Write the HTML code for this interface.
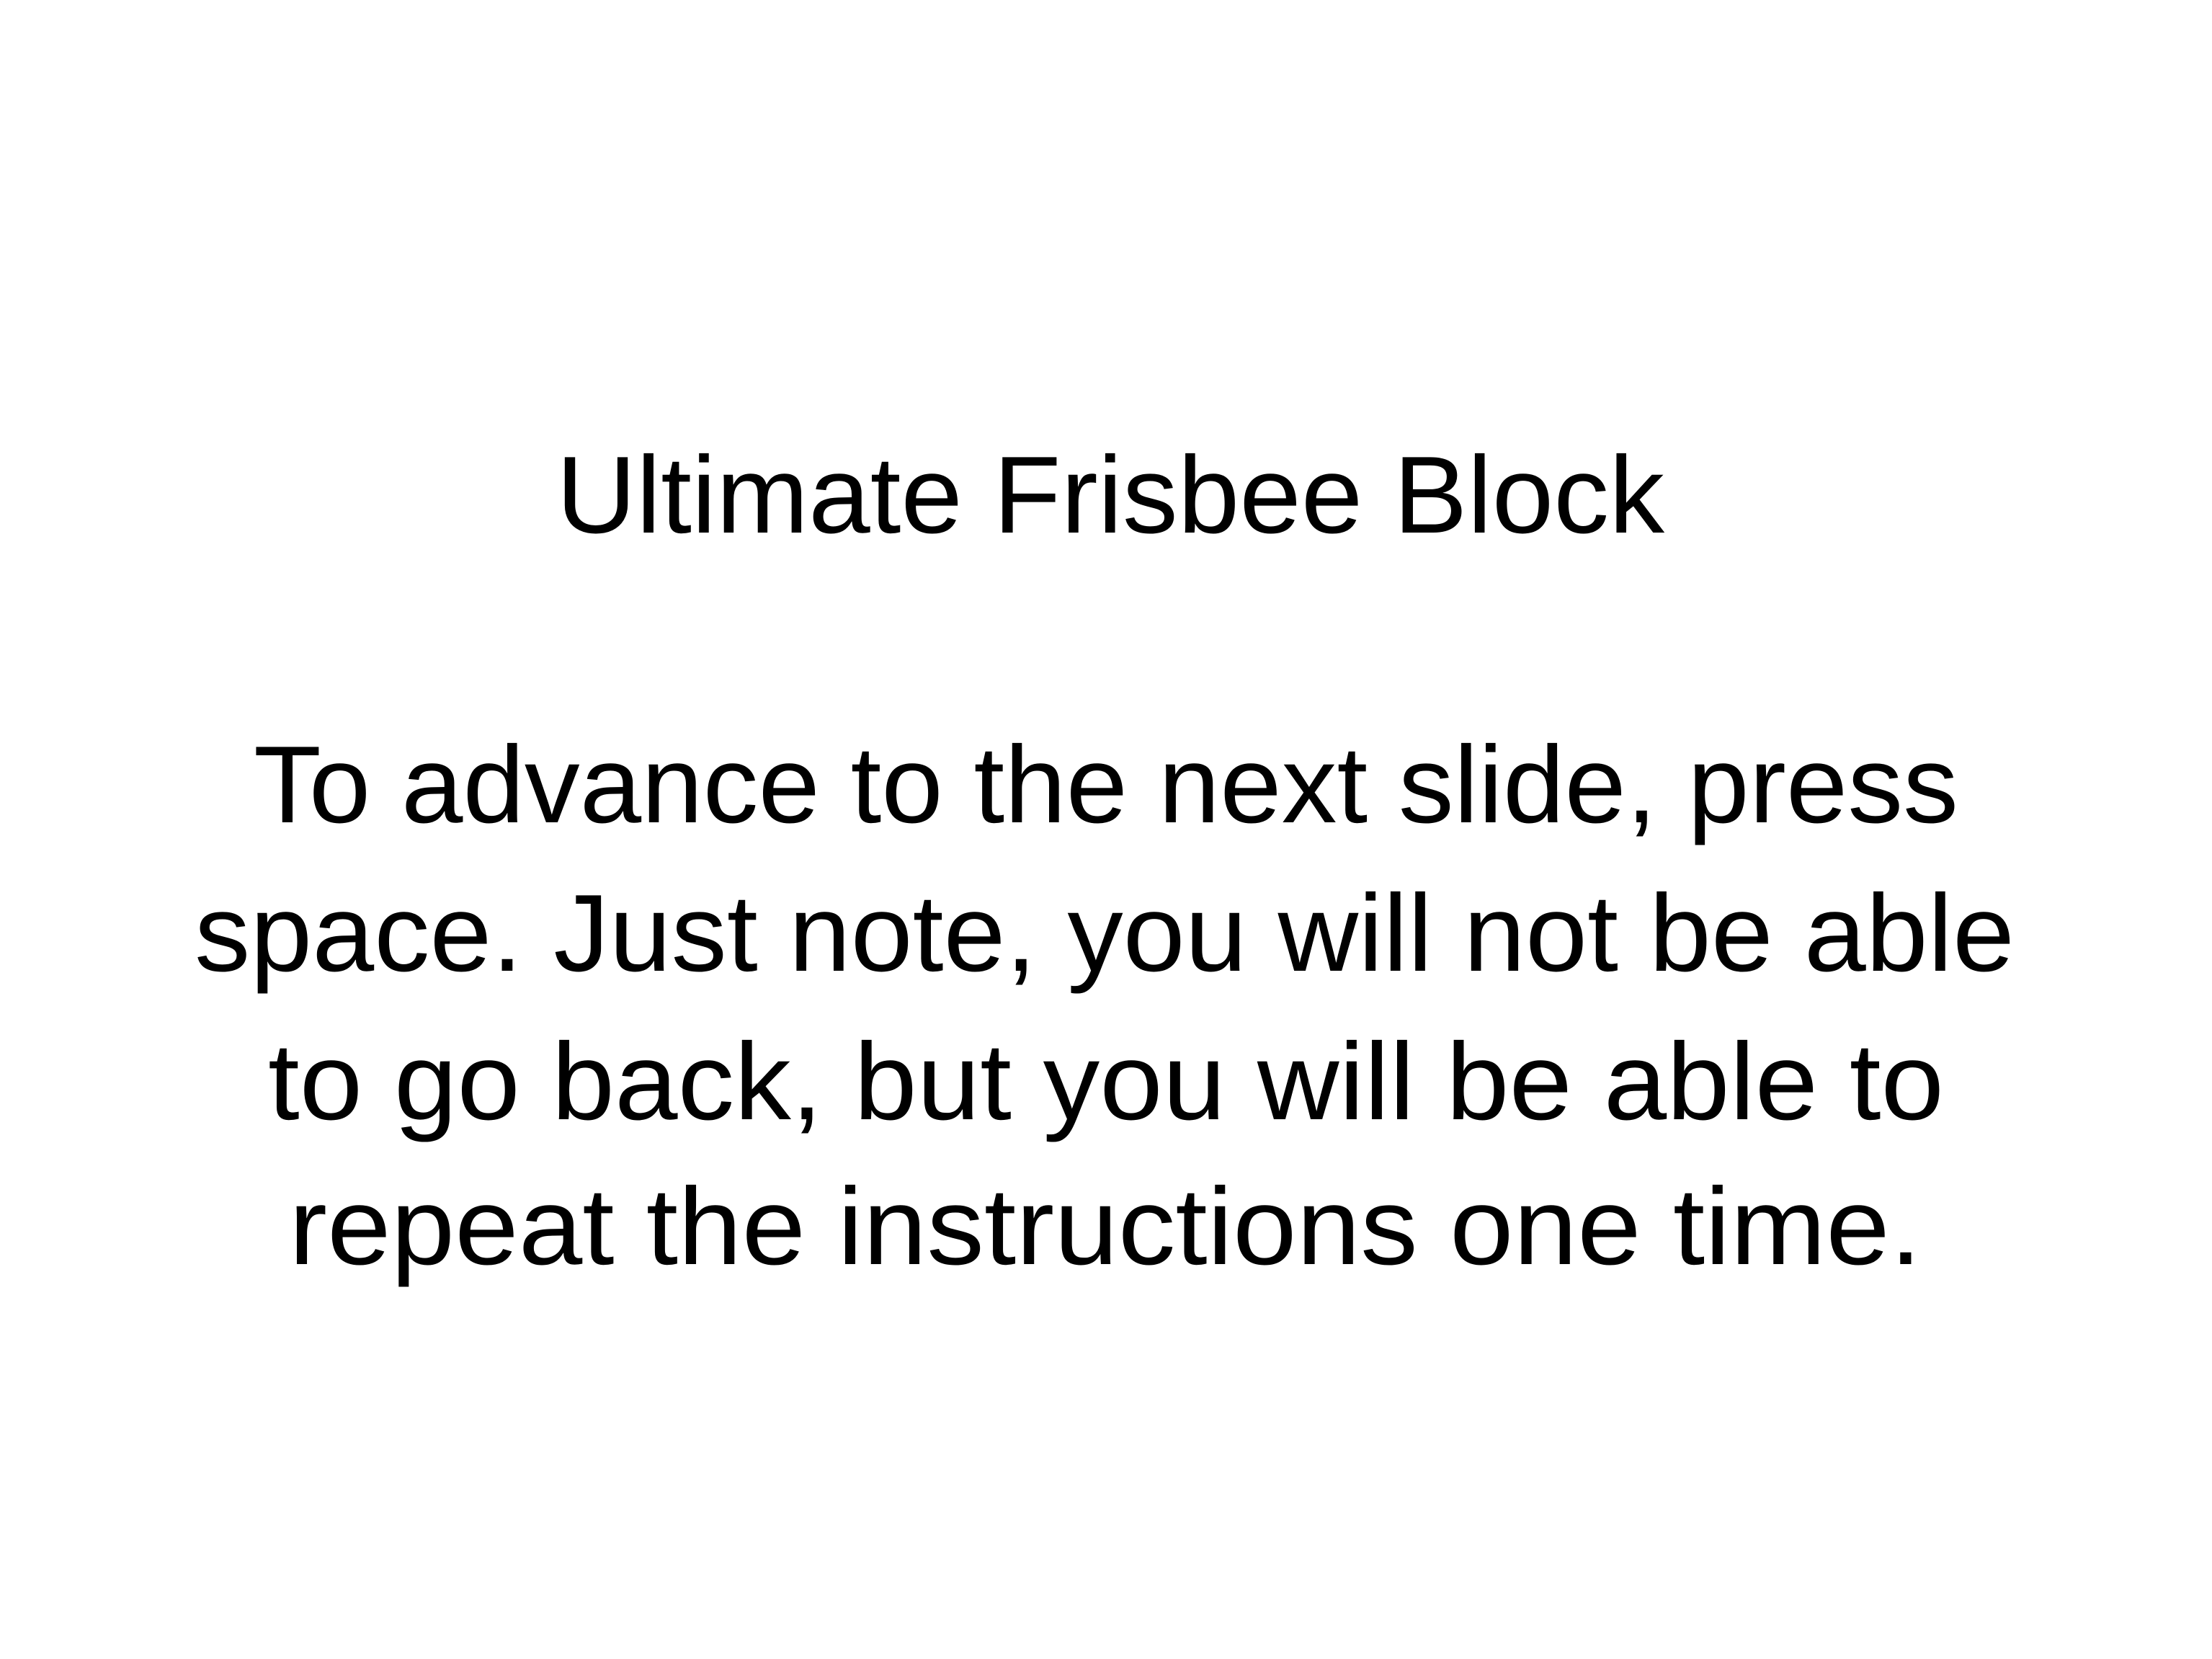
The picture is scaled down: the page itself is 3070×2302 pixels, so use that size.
<!DOCTYPE html>
<html><head><meta charset="utf-8"><style>
html,body{margin:0;padding:0;background:#fff;}
svg{display:block;}
text{font-family:"Liberation Sans",sans-serif;font-size:152px;fill:#000;}
</style></head><body>
<svg width="3070" height="2302" viewBox="0 0 3070 2302" xmlns="http://www.w3.org/2000/svg">
<rect width="3070" height="2302" fill="#fff"/>
<text x="772" y="739" textLength="1538" lengthAdjust="spacingAndGlyphs">Ultimate Frisbee Block</text>
<text x="352" y="1141" textLength="2366" lengthAdjust="spacingAndGlyphs">To advance to the next slide, press</text>
<text x="270" y="1347" textLength="2526" lengthAdjust="spacingAndGlyphs">space. Just note, you will not be able</text>
<text x="372" y="1553" textLength="2326" lengthAdjust="spacingAndGlyphs">to go back, but you will be able to</text>
<text x="401" y="1754" textLength="2266" lengthAdjust="spacingAndGlyphs">repeat the instructions one time.</text>
</svg>
</body></html>
